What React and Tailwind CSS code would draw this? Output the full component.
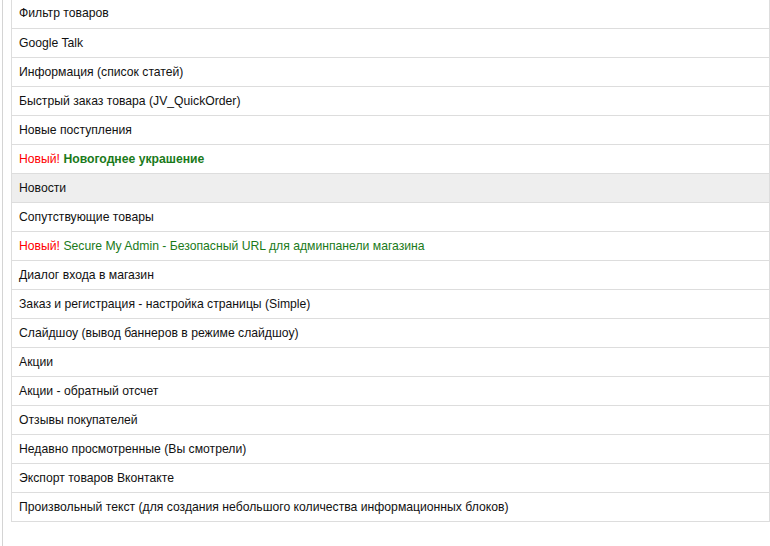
import React from "react";

const rows = [
  { title: "Фильтр товаров" },
  { title: "Google Talk" },
  { title: "Информация (список статей)" },
  { title: "Быстрый заказ товара (JV_QuickOrder)" },
  { title: "Новые поступления" },
  { title: "Новогоднее украшение", isNew: true, bold: true },
  { title: "Новости", active: true },
  { title: "Сопутствующие товары" },
  { title: "Secure My Admin - Безопасный URL для админпанели магазина", isNew: true },
  { title: "Диалог входа в магазин" },
  { title: "Заказ и регистрация - настройка страницы (Simple)" },
  { title: "Слайдшоу (вывод баннеров в режиме слайдшоу)" },
  { title: "Акции" },
  { title: "Акции - обратный отсчет" },
  { title: "Отзывы покупателей" },
  { title: "Недавно просмотренные (Вы смотрели)" },
  { title: "Экспорт товаров Вконтакте" },
  { title: "Произвольный текст (для создания небольшого количества информационных блоков)" },
];

export default function App() {
  return (
    <div className="h-[546px] overflow-hidden bg-white font-['Liberation_Sans',Arial,sans-serif] text-[12.2px]">
      <div className="flex h-full">
        <div className="w-[2px] shrink-0" />
        <div className="w-px shrink-0 bg-[#d4d4d4]" />
        <div className="flex-1 pl-[8px]">
          <ul className="-mt-[2px] border border-[#dddddd]">
            {rows.map((row, i) => (
              <li
                key={i}
                className={
                  "h-[29px] flex items-center px-[7px] border-[#dddddd] " +
                  (i > 0 ? "border-t " : "") +
                  (row.active ? "bg-[#eeeeee]" : "bg-white")
                }
              >
                {row.isNew ? (
                  <span>
                    <span className="text-[#ff0000]">Новый!</span>{" "}
                    <span className={row.bold ? "font-bold text-[#1a7a1a]" : "text-[#1a7a1a]"}>{row.title}</span>
                  </span>
                ) : (
                  <span className="text-[#111111]">{row.title}</span>
                )}
              </li>
            ))}
          </ul>
        </div>
      </div>
    </div>
  );
}
